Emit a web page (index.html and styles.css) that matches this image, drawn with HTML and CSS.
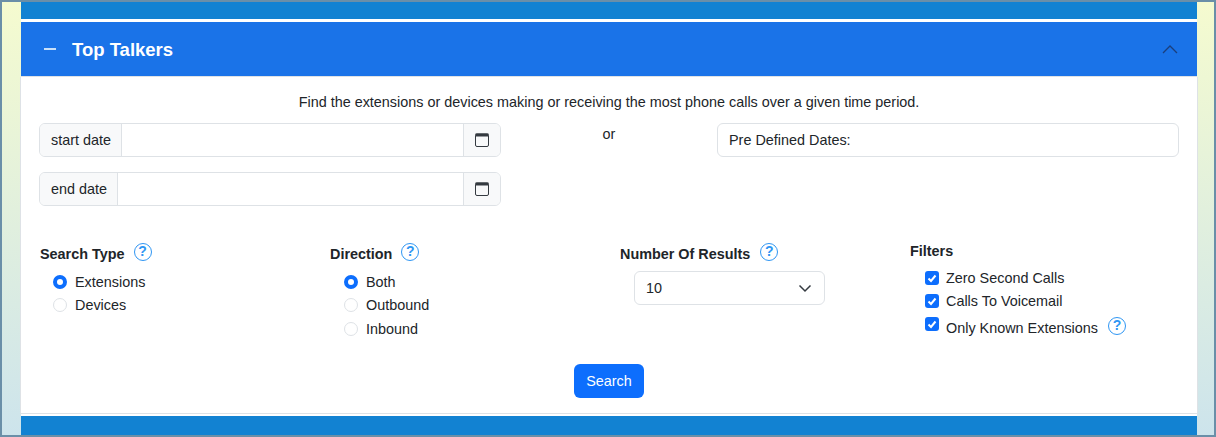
FILE: index.html
```html
<!DOCTYPE html>
<html lang="en">
<head>
    <meta charset="UTF-8">
    <title>Top Talkers</title>
    <link rel="stylesheet" href="styles.css">
</head>
<body>
    <div class="page">
        <div class="panel">
            <div class="bar"></div>
            <div class="header">
                <span class="minus"></span>
                <h2>Top Talkers</h2>
                <svg class="chevron" width="16" height="16" viewBox="0 0 16 16"><path d="M1 12 L8 5 L15 12" fill="none" stroke="#1b3f7c" stroke-width="1.3"/></svg>
            </div>
            <div class="body">
                <p class="intro">Find the extensions or devices making or receiving the most phone calls over a given time period.</p>
                <div class="dates">
                    <div class="date-col">
                        <div class="input-group">
                            <span class="addon">start date</span>
                            <input type="text" class="field">
                            <span class="addon cal">
                                <svg width="14" height="14" viewBox="0 0 14 14"><rect x="0.5" y="1" width="13" height="12.5" rx="1.5" fill="#f8f9fa" stroke="#343a40"/><rect x="0.5" y="0.5" width="13" height="3" fill="#343a40"/></svg>
                            </span>
                        </div>
                        <div class="input-group">
                            <span class="addon">end date</span>
                            <input type="text" class="field">
                            <span class="addon cal">
                                <svg width="14" height="14" viewBox="0 0 14 14"><rect x="0.5" y="1" width="13" height="12.5" rx="1.5" fill="#f8f9fa" stroke="#343a40"/><rect x="0.5" y="0.5" width="13" height="3" fill="#343a40"/></svg>
                            </span>
                        </div>
                    </div>
                    <div class="or">or</div>
                    <div class="predefined">Pre Defined Dates:</div>
                </div>
                <div class="options">
                    <div class="col">
                        <div class="label">Search Type <span class="help">?</span></div>
                        <label class="check"><input type="radio" name="type" checked> Extensions</label>
                        <label class="check"><input type="radio" name="type"> Devices</label>
                    </div>
                    <div class="col direction">
                        <div class="label">Direction <span class="help">?</span></div>
                        <label class="check"><input type="radio" name="dir" checked> Both</label>
                        <label class="check"><input type="radio" name="dir"> Outbound</label>
                        <label class="check"><input type="radio" name="dir"> Inbound</label>
                    </div>
                    <div class="col results">
                        <div class="label">Number Of Results <span class="help">?</span></div>
                        <div class="select">
                            <span>10</span>
                            <svg width="16" height="16" viewBox="0 0 16 16"><path d="M2.5 5.5 L8 11 L13.5 5.5" fill="none" stroke="#343a40" stroke-width="1.5"/></svg>
                        </div>
                    </div>
                    <div class="col filters">
                        <div class="label">Filters</div>
                        <label class="check"><input type="checkbox" checked> Zero Second Calls</label>
                        <label class="check"><input type="checkbox" checked> Calls To Voicemail</label>
                        <label class="check known"><input type="checkbox" checked> Only Known Extensions <span class="help">?</span></label>
                    </div>
                </div>
                <div class="actions"><button>Search</button></div>
            </div>
            <div class="bar bottom"></div>
        </div>
    </div>
</body>
</html>
```

FILE: styles.css
```css
html, body { margin: 0; padding: 0; height: 100%; overflow: hidden; }

body { font-family: "Liberation Sans", Arial, sans-serif; font-size: 14.4px; color: #212529; }

.page {
    box-sizing: border-box;
    height: 437px;
    border: 2px solid #6a8fa8;
    background: linear-gradient(#f5fbcf, #cde4ec);
    padding: 0 17px 0 19px;
}

.panel { display: flex; flex-direction: column; height: 100%; }

.bar { height: 17px; background: #1282d2; border-bottom: 3px solid #fff; }
.bar.bottom { height: 19px; border: 0; border-top: 2px solid #fff; }

.header {
    height: 54px;
    background: #1a73e8;
    border-bottom: 1px solid #dee2e6;
    display: flex;
    align-items: center;
    padding: 0 19px 0 23px;
    color: #fff;
}
.minus { width: 12px; height: 2px; background: #c9e0f8; margin-right: 16px; }
.header h2 { margin: 0; padding-top: 1px; font-size: 18.5px; font-weight: bold; flex: 1; }

.body {
    flex: 1;
    background: #fff;
    border: 1px solid #dee2e6;
    border-top: 0;
    margin: 0 -1px;
    padding: 0 18px;
}

.intro { margin: 17px 0 12px; text-align: center; line-height: 17px; }

.dates { display: flex; }
.date-col { width: 462px; display: flex; flex-direction: column; gap: 15px; }
.input-group { display: flex; height: 34px; box-sizing: border-box; border: 1px solid #dee2e6; border-radius: 6px; overflow: hidden; }
.addon { background: #f8f9fa; padding: 0 10px 0 11px; display: flex; align-items: center; }
.field { flex: 1; min-width: 0; border: 0; border-left: 1px solid #dee2e6; border-right: 1px solid #dee2e6; padding: 0; outline: none; }
.cal { width: 36px; box-sizing: border-box; padding: 0; justify-content: center; }

.or { width: 216px; text-align: center; margin-top: 3px; line-height: 16px; }
.predefined {
    width: 462px;
    height: 34px;
    box-sizing: border-box;
    border: 1px solid #dee2e6;
    border-radius: 6px;
    padding: 0 11px;
    display: flex;
    align-items: center;
}

.options { display: flex; margin-top: 37px; padding-left: 1px; }
.col { flex: none; width: 290px; }
.label { font-weight: bold; display: flex; align-items: center; height: 22px; margin-bottom: 5px; }

.help {
    box-sizing: border-box;
    width: 18px;
    height: 18px;
    border: 1.3px solid #2f96f3;
    border-radius: 50%;
    color: #2f96f3;
    font-size: 14px;
    font-weight: bold;
    line-height: 15.5px;
    text-align: center;
    margin: 0 0 4px 9px;
}
.results .help { margin-left: 10px; }

.check { display: flex; align-items: center; gap: 8px; height: 23.5px; margin-left: 13px; }
.check input {
    appearance: none;
    flex: none;
    width: 14px;
    height: 14px;
    margin: 0;
    background: #fff;
    border: 1px solid #dee2e6;
    border-radius: 50%;
}
.check input[type=radio]:checked { border: 4px solid #0d6efd; }
.check input[type=checkbox] {
    border: 0;
    border-radius: 3px;
    background: #0d6efd url("data:image/svg+xml,%3Csvg xmlns='http://www.w3.org/2000/svg' viewBox='0 0 14 14'%3E%3Cpath d='M3.5 7.5 L6 10 L10.5 4.5' fill='none' stroke='%23fff' stroke-width='2'/%3E%3C/svg%3E");
}

.direction .check { margin-left: 14px; }

.filters { width: 270px; margin: -3px 0 -3px; }
.filters .label { margin-bottom: 4px; }
.filters .check { margin-left: 15px; gap: 7px; }
.filters .known { height: 30px; }
.known input { align-self: flex-start; margin-top: 4px; }
.known .help { margin-left: 3px; }

.select {
    margin: 6px 0 0 14px;
    width: 191px;
    height: 34px;
    box-sizing: border-box;
    border: 1px solid #dee2e6;
    border-radius: 6px;
    padding: 0 11px;
    display: flex;
    align-items: center;
    justify-content: space-between;
}

.actions { display: flex; justify-content: center; margin-top: 23px; }
button {
    font: inherit;
    color: #fff;
    background: #0d6efd;
    border: 0;
    border-radius: 6px;
    width: 70px;
    height: 34px;
}
```
